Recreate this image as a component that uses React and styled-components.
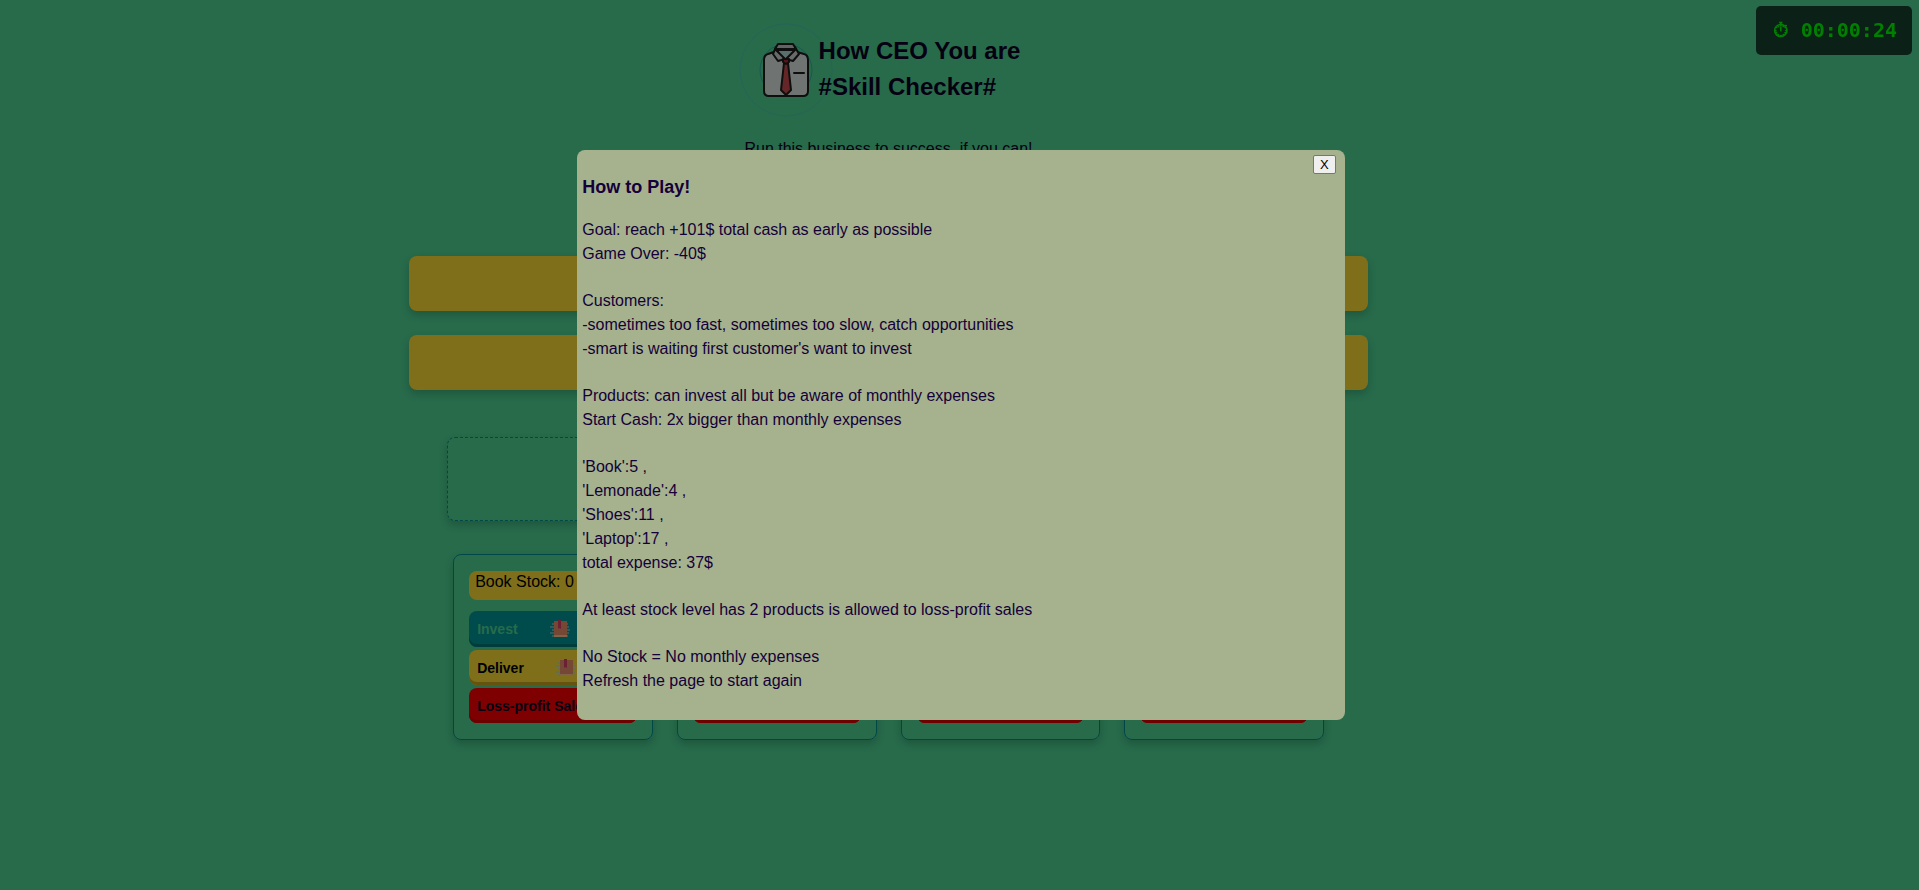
import React, { useState } from "react";
import styled, { createGlobalStyle } from "styled-components";

const Global = createGlobalStyle`
  * { box-sizing: border-box; }
  body {
    margin: 0;
    background: #4ed696;
    color: #0c0024;
    font-family: "Liberation Sans", Arial, sans-serif;
    font-size: 16px;
    line-height: 24px;
  }
`;

const Page = styled.div`
  display: flex;
  flex-direction: column;
  align-items: center;
  min-height: 100vh;
  padding: 23px 142px 140px 0;
`;

const Header = styled.header`
  display: flex;
  flex-direction: column;
  align-items: center;
`;

const Brand = styled.div`
  display: flex;
  align-items: flex-start;
  padding-right: 18px;
`;

const Logo = styled.svg`
  width: 94px;
  height: 94px;
  margin-right: -14px;
`;

const Title = styled.h1`
  margin: 10px 0 0;
  font-size: 24px;
  line-height: 36px;
  white-space: pre-line;
`;

const Tagline = styled.p`
  margin: 20px 0 0;
`;

const Panels = styled.section`
  display: flex;
  flex-direction: column;
  gap: 24px;
  width: 50vw;
  margin-top: 95px;
`;

const Panel = styled.div`
  height: 55px;
  border-radius: 8px;
  background: #ffdf34;
  box-shadow: 0 4px 8px rgba(0, 0, 0, 0.2);
`;

const CustomerArea = styled.section`
  width: 46vw;
  height: 84px;
  margin-top: 47px;
  border: 1px dashed #009090;
  border-radius: 8px;
  box-shadow: 0 4px 8px rgba(0, 0, 0, 0.2);
`;

const Products = styled.section`
  display: grid;
  grid-template-columns: repeat(4, 1fr);
  gap: 24px;
  width: 49%;
  margin-top: 33px;
`;

const Card = styled.article`
  display: flex;
  flex-direction: column;
  padding: 16px 15px;
  border: 1px solid #009090;
  border-radius: 8px;
  box-shadow: 0 4px 8px rgba(0, 0, 0, 0.2);
`;

const Stock = styled.div`
  height: 29px;
  margin-bottom: 11px;
  padding: 0 6px;
  border-radius: 8px;
  background: #ffdf34;
  color: #000;
  line-height: 22px;
  white-space: nowrap;
`;

const tones = {
  invest: { bg: "#009898", fg: "#4ed696", edge: "#007878" },
  deliver: { bg: "#ffdf34", fg: "#000", edge: "#c8a820" },
  sale: { bg: "#ff0000", fg: "#0c0024", edge: "#dc0000" },
};

const Action = styled.button`
  display: flex;
  align-items: center;
  gap: 32px;
  height: ${(p) => (p.$tone === "invest" ? 36 : 35)}px;
  margin-bottom: 3px;
  padding: 0 8px;
  border: 0;
  border-radius: 8px;
  background: ${(p) => tones[p.$tone].bg};
  box-shadow: inset 0 -3px 0 ${(p) => tones[p.$tone].edge};
  color: ${(p) => tones[p.$tone].fg};
  font: bold 14px/20px "Liberation Sans", Arial, sans-serif;
  white-space: nowrap;
  &:last-child { margin-bottom: 0; }
`;

const BookSvg = styled.svg`
  flex-shrink: 0;
  width: 20px;
  height: 18px;
`;

const Backdrop = styled.div`
  position: fixed;
  inset: 0;
  display: flex;
  align-items: flex-start;
  justify-content: center;
  padding: 150px 0 0 3px;
  background: rgba(0, 0, 0, 0.5);
`;

const Dialog = styled.section`
  position: relative;
  width: 40vw;
  padding: 24px 5px 27px;
  border-radius: 8px;
  background: #a6b28d;
  color: #14003a;
`;

const Close = styled.button`
  position: absolute;
  top: 5px;
  right: 9px;
  width: 23px;
  height: 19px;
  padding: 0;
  border: 1px solid #767676;
  border-radius: 2px;
  background: #efefef;
  color: #000;
  font: 13px/16px "Liberation Sans", Arial, sans-serif;
`;

const DialogTitle = styled.h2`
  margin: 0 0 18px;
  font-size: 18px;
  line-height: 26px;
`;

const Rules = styled.div`
  display: flex;
  flex-direction: column;
  gap: 23px;
`;

const Rule = styled.p`
  margin: 0;
  white-space: pre-line;
`;

const Timer = styled.div`
  position: fixed;
  top: 6px;
  right: 7px;
  padding: 12px 15px 13px 17px;
  border-radius: 5px;
  background: rgba(0, 0, 0, 0.7);
  color: #008000;
  font: bold 20px/24px "DejaVu Sans Mono", monospace;
  white-space: pre;
`;

const rules = [
  "Goal: reach +101$ total cash as early as possible\nGame Over: -40$",
  "Customers:\n-sometimes too fast, sometimes too slow, catch opportunities\n-smart is waiting first customer's want to invest",
  "Products: can invest all but be aware of monthly expenses\nStart Cash: 2x bigger than monthly expenses",
  "'Book':5 ,\n'Lemonade':4 ,\n'Shoes':11 ,\n'Laptop':17 ,\ntotal expense: 37$",
  "At least stock level has 2 products is allowed to loss-profit sales",
  "No Stock = No monthly expenses\nRefresh the page to start again",
];

function ShirtLogo() {
  return (
    <Logo viewBox="0 0 94 94" fill="none" aria-hidden="true">
      <circle cx="47" cy="47" r="46" stroke="#4cc8b0" />
      <circle cx="47" cy="47" r="26" stroke="#34b0a8" />
      <g stroke="#1c1c1c" strokeWidth="2" strokeLinejoin="round" strokeLinecap="round">
        <path d="M35 29 L29 31 Q25 32 25 37 V68 Q25 73 30 73 H64 Q69 73 69 68 V37 Q69 32 65 31 L58 29 Z" fill="#dfe8e4" />
        <path d="M38 27 H56 L53 33 L47 37 L41 33 Z" fill="#b8dcd8" />
        <path d="M39 21 H54 L57 26 H36 Z" fill="#c4c8c6" />
        <path d="M37 24 L34 31 L39 38 L46 36 L37 27 Z M56 24 L60 31 L54 38 L47 36 L56 27 Z" fill="#d0d6d4" />
        <path d="M45 40 H49 L52 67 L47 72 L42 67 Z" fill="#c84c4c" />
        <path d="M44 36 H50 V39 L47 41 L44 39 Z" fill="#b02828" />
        <path d="M55 50 H65" />
      </g>
    </Logo>
  );
}

function BookIcon() {
  return (
    <BookSvg viewBox="0 0 20 18" aria-hidden="true">
      <path d="M2 4H18M0 7H19M2 10H20M0 13H19M2 16H18" stroke="#a8d8e8" strokeWidth="1" />
      <rect x="4" y="1" width="13" height="15" fill="#e89068" />
      <path d="M4 15H17V17H4Z" fill="#ffc890" />
      <path d="M8 0H11V9L9 8L8 9Z" fill="#d84068" />
    </BookSvg>
  );
}

function ProductCard({ name }) {
  return (
    <Card>
      <Stock>{name} Stock: 0</Stock>
      <Action $tone="invest">Invest <BookIcon /></Action>
      <Action $tone="deliver">Deliver <BookIcon /></Action>
      <Action $tone="sale">Loss-profit Sale</Action>
    </Card>
  );
}

export default function App() {
  const [open, setOpen] = useState(true);
  return (
    <>
      <Global />
      <Page>
        <Header>
          <Brand>
            <ShirtLogo />
            <Title>{"How CEO You are\n#Skill Checker#"}</Title>
          </Brand>
          <Tagline>Run this business to success, if you can!</Tagline>
        </Header>
        <Panels>
          <Panel />
          <Panel />
        </Panels>
        <CustomerArea />
        <Products>
          {["Book", "Lemonade", "Shoes", "Laptop"].map((name) => (
            <ProductCard key={name} name={name} />
          ))}
        </Products>
      </Page>
      {open && (
        <Backdrop>
          <Dialog role="dialog" aria-labelledby="how-to-play">
            <Close onClick={() => setOpen(false)}>X</Close>
            <DialogTitle id="how-to-play">How to Play!</DialogTitle>
            <Rules>
              {rules.map((text) => (
                <Rule key={text}>{text}</Rule>
              ))}
            </Rules>
          </Dialog>
        </Backdrop>
      )}
      <Timer>⏱ 00:00:24</Timer>
    </>
  );
}
